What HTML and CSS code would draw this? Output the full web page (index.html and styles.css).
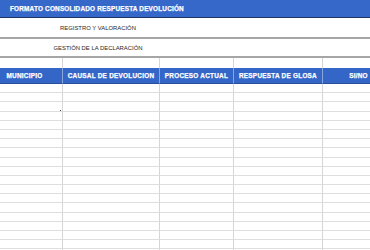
FILE: index.html
```html
<!DOCTYPE html>
<html lang="es">
<head>
<meta charset="utf-8">
<link rel="stylesheet" href="styles.css">
</head>
<body>
<div class="sheet">
  <div class="title">FORMATO CONSOLIDADO RESPUESTA DEVOLUCIÓN</div>
  <div class="merged first"><span class="mtext">REGISTRO Y VALORACIÓN</span></div>
  <div class="merged second"><span class="mtext">GESTIÓN DE LA DECLARACIÓN</span></div>
  <div class="grid">
    <div class="row spacer"><div></div><div></div><div></div><div></div><div></div></div>
    <div class="row head"><div>MUNICIPIO</div><div>CAUSAL DE DEVOLUCION</div><div>PROCESO ACTUAL</div><div>RESPUESTA DE GLOSA</div><div>SI/NO</div></div>
    <div class="row body"><div></div><div></div><div></div><div></div><div></div></div>
    <div class="row body"><div></div><div></div><div></div><div></div><div></div></div>
    <div class="row body"><div class="dotcell"><span class="dot"></span></div><div></div><div></div><div></div><div></div></div>
    <div class="row body"><div></div><div></div><div></div><div></div><div></div></div>
    <div class="row body"><div></div><div></div><div></div><div></div><div></div></div>
    <div class="row body"><div></div><div></div><div></div><div></div><div></div></div>
    <div class="row body"><div></div><div></div><div></div><div></div><div></div></div>
    <div class="row body"><div></div><div></div><div></div><div></div><div></div></div>
    <div class="row body"><div></div><div></div><div></div><div></div><div></div></div>
    <div class="row body"><div></div><div></div><div></div><div></div><div></div></div>
    <div class="row body"><div></div><div></div><div></div><div></div><div></div></div>
    <div class="row body"><div></div><div></div><div></div><div></div><div></div></div>
    <div class="row body"><div></div><div></div><div></div><div></div><div></div></div>
    <div class="row body"><div></div><div></div><div></div><div></div><div></div></div>
    <div class="row body"><div></div><div></div><div></div><div></div><div></div></div>
    <div class="row body"><div></div><div></div><div></div><div></div><div></div></div>
    <div class="row body"><div></div><div></div><div></div><div></div><div></div></div>
    <div class="row body"><div></div><div></div><div></div><div></div><div></div></div>
    <div class="row body"><div></div><div></div><div></div><div></div><div></div></div>
  </div>
</div>
</body>
</html>
```
FILE: styles.css
```css
html, body {
  margin: 0;
  padding: 0;
  background: #ffffff;
}
body {
  width: 370px;
  height: 250px;
  overflow: hidden;
  font-family: "Liberation Sans", Arial, sans-serif;
}
.sheet {
  width: 370px;
  overflow: hidden;
}
.title {
  height: 17px;
  line-height: 17px;
  background: #3668c9;
  border-bottom: 1px solid #1d3564;
  color: #ffffff;
  font-weight: bold;
  font-size: 6.4px;
  letter-spacing: 0.2px;
  -webkit-text-stroke: 0.25px #ffffff;
  padding-left: 10px;
  white-space: nowrap;
}
.merged {
  display: flex;
  align-items: center;
  justify-content: center;
  width: 196px;
  box-sizing: content-box;
  padding-right: 174px;
  border-bottom: 2px solid #a6a6a6;
  color: #1e1e1e;
  font-size: 5.9px;
  white-space: nowrap;
}
.merged.first { height: 19px; }
.merged.second { height: 17px; }
.grid {
  margin-left: -13px;
  width: 408px;
}
.row {
  display: grid;
  grid-template-columns: 76px 97px 74px 89px 72px;
}
.row > div {
  border-right: 1px solid #d6d6d6;
  border-bottom: 1px solid #dedede;
  box-sizing: border-box;
}
.row.spacer > div {
  height: 10px;
  border-bottom: none;
}
.row.head > div {
  height: 16px;
  background: #3466c8;
  border-right: 1px solid #8aa7dd;
  border-bottom: 1px solid #2a4f9a;
  color: #ffffff;
  font-weight: bold;
  font-size: 6.4px;
  letter-spacing: 0.25px;
  -webkit-text-stroke: 0.25px #ffffff;
  display: flex;
  align-items: center;
  justify-content: center;
  white-space: nowrap;
}
.row.body > div {
  height: 9.2px;
}
.dotcell {
  position: relative;
}
.dot {
  position: absolute;
  right: 1px;
  top: 8px;
  width: 1px;
  height: 1px;
  background: #444444;
}
```
